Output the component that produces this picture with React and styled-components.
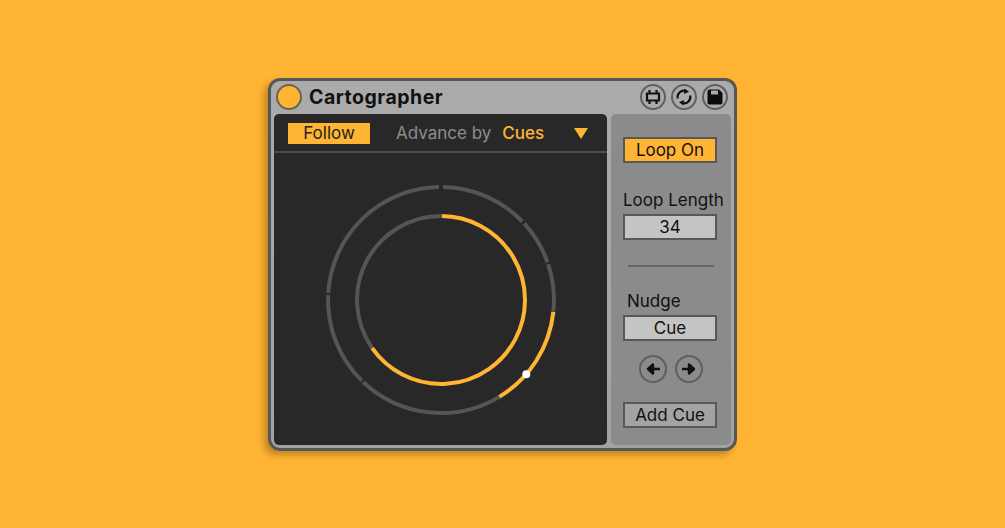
import React from 'react';
import styled, { createGlobalStyle } from 'styled-components';

const amber = '#ffb433';
const ring = '#555555';

const Global = createGlobalStyle`
	html, body { margin: 0; padding: 0; }
	body {
		background: ${amber};
		font-family: Inter, "Noto Sans", "Liberation Sans", sans-serif;
		overflow: hidden;
	}
`;

const Page = styled.div`
	width: 1005px;
	height: 528px;
	display: flex;
	justify-content: center;
	align-items: center;
	box-sizing: border-box;
	padding-top: 1px;
`;

const Device = styled.div`
	width: 469px;
	height: 373px;
	box-sizing: border-box;
	border: 3px solid #575757;
	border-radius: 12px;
	background: linear-gradient(180deg, #ababab 0%, #a2a2a2 100%);
	box-shadow: -4px 4px 6px rgba(120, 80, 10, 0.45);
	padding: 0 3px 3px 3px;
	display: flex;
	flex-direction: column;
`;

const TitleBar = styled.div`
	height: 33px;
	flex: none;
	box-sizing: border-box;
	display: flex;
	align-items: center;
	padding: 0 0 1px 0;
`;

const Lamp = styled.div`
	width: 26px;
	height: 26px;
	box-sizing: border-box;
	border-radius: 50%;
	background: ${amber};
	border: 2px solid #6a6450;
	margin-right: 7px;
	margin-left: 2px;
`;

const Title = styled.div`
	font-size: 19.5px;
	font-weight: 700;
	letter-spacing: 0.5px;
	color: #111;
	flex: 1;
`;

const TitleIcons = styled.div`
	display: flex;
	gap: 5px;
	margin-right: 3px;
`;

const RoundButton = styled.div`
	width: 26px;
	height: 26px;
	box-sizing: border-box;
	border-radius: 50%;
	border: 2px solid #5f5f5f;
	display: flex;
	align-items: center;
	justify-content: center;
`;

const Body = styled.div`
	flex: 1;
	display: flex;
	gap: 4px;
	min-height: 0;
`;

const Dark = styled.div`
	width: 333px;
	flex: none;
	background: #282828;
	border-radius: 5px;
	display: flex;
	flex-direction: column;
`;

const DarkHead = styled.div`
	height: 39px;
	flex: none;
	box-sizing: border-box;
	border-bottom: 2px solid #4d4d4d;
	display: flex;
	align-items: center;
	padding: 1px 19px 0 14px;
`;

const FollowTab = styled.div`
	width: 82px;
	height: 21px;
	background: ${amber};
	color: #222;
	font-size: 17px;
	line-height: 21px;
	text-align: center;
`;

const AdvanceLabel = styled.div`
	margin-left: 26px;
	font-size: 17px;
	color: #8e8e8e;
`;

const AdvanceValue = styled.div`
	margin-left: 11px;
	font-size: 17px;
	font-weight: 500;
	color: ${amber};
	flex: 1;
`;

const Caret = styled.div`
	width: 0;
	height: 0;
	border-left: 7px solid transparent;
	border-right: 7px solid transparent;
	border-top: 11px solid ${amber};
`;

const Rings = styled.div`
	flex: 1;
	display: flex;
	align-items: center;
	justify-content: center;
	padding-top: 2px;
`;

const Side = styled.div`
	width: 120px;
	flex: none;
	box-sizing: border-box;
	background: #8b8b8b;
	border-radius: 5px;
	padding: 23px 0 0 12px;
	display: flex;
	flex-direction: column;
`;

const Control = styled.div`
	width: 94px;
	height: 26px;
	flex: none;
	box-sizing: border-box;
	border: 2px solid #585858;
	background: ${(p) => p.$bg};
	color: #111;
	font-size: 17px;
	line-height: 22px;
	text-align: center;
`;

const Label = styled.div`
	font-size: 17px;
	line-height: 20px;
	color: #111;
	white-space: nowrap;
	margin-top: ${(p) => p.$top}px;
	margin-left: ${(p) => p.$left || 0}px;
	margin-bottom: 4px;
`;

const Divider = styled.div`
	width: 86px;
	height: 2px;
	background: #666;
	margin: 25px 0 24px 5px;
`;

const ArrowRow = styled.div`
	display: flex;
	gap: 8px;
	margin: 14px 0 19px 16px;
	& > div { width: 28px; height: 28px; }
`;

function polar(r, deg) {
	const a = ((deg - 90) * Math.PI) / 180;
	return [120 + r * Math.cos(a), 120 + r * Math.sin(a)];
}

function Arc({ r, from, to, color }) {
	const [x1, y1] = polar(r, from);
	const [x2, y2] = polar(r, to);
	const large = to - from > 180 ? 1 : 0;
	return <path d={`M${x1} ${y1}A${r} ${r} 0 ${large} 1 ${x2} ${y2}`} fill="none" stroke={color} strokeWidth="4" />;
}

const outer = [
	[1, 46, ring],
	[47.5, 70.5, ring],
	[71.5, 95.5, ring],
	[96, 149, amber],
	[149, 223.5, ring],
	[224.5, 272.5, ring],
	[273.5, 359, ring],
];

function Dial() {
	const dot = polar(113, 131);
	return (
		<svg width="240" height="240" viewBox="0 0 240 240">
			{outer.map(([a, b, c]) => (
				<Arc key={a} r={113} from={a} to={b} color={c} />
			))}
			<Arc r={84} from={235} to={360} color={ring} />
			<Arc r={84} from={0.5} to={235} color={amber} />
			<circle cx={dot[0]} cy={dot[1]} r="4" fill="#fff" />
		</svg>
	);
}

const icon = { width: 18, height: 18, viewBox: '0 0 18 18' };

export default function App() {
	return (
		<Page>
			<Global />
			<Device>
				<TitleBar>
					<Lamp />
					<Title>Cartographer</Title>
					<TitleIcons>
						<RoundButton>
							<svg {...icon}>
								<path d="M3 5.500h12v7H3z M5.500 2v3.500 M12.500 2v3.500 M5.500 12.500V16 M12.500 12.500V16" fill="none" stroke="#111" strokeWidth="2.200" />
							</svg>
						</RoundButton>
						<RoundButton>
							<svg {...icon}>
								<path d="M2.800 10.500A6.300 6.300 0 0 1 10.500 2.900" fill="none" stroke="#111" strokeWidth="2.200" />
								<path d="M9.500 0.500l4.500 3.300-5 2.300z" fill="#111" />
								<path d="M15.200 7.500A6.300 6.300 0 0 1 7.500 15.100" fill="none" stroke="#111" strokeWidth="2.200" />
								<path d="M8.500 17.500L4 14.200l5-2.300z" fill="#111" />
							</svg>
						</RoundButton>
						<RoundButton>
							<svg {...icon}>
								<path d="M1.500 3.500a2 2 0 0 1 2-2H13l3.500 3.500v9.500a2 2 0 0 1-2 2h-11a2 2 0 0 1-2-2z" fill="#0c0c0c" />
								<rect x="5" y="2.500" width="7" height="4" fill="#a8a8a8" />
							</svg>
						</RoundButton>
					</TitleIcons>
				</TitleBar>
				<Body>
					<Dark>
						<DarkHead>
							<FollowTab>Follow</FollowTab>
							<AdvanceLabel>Advance by</AdvanceLabel>
							<AdvanceValue>Cues</AdvanceValue>
							<Caret />
						</DarkHead>
						<Rings>
							<Dial />
						</Rings>
					</Dark>
					<Side>
						<Control $bg={amber}>Loop On</Control>
						<Label $top={27}>Loop Length</Label>
						<Control $bg="#c4c4c4">34</Control>
						<Divider />
						<Label $top={0} $left={4}>Nudge</Label>
						<Control $bg="#c4c4c4">Cue</Control>
						<ArrowRow>
							<RoundButton>
								<svg {...icon}>
									<path d="M16 9H7 M9 4.500L4 9l5 4.500z" fill="#111" stroke="#111" strokeWidth="2.400" strokeLinejoin="round" />
								</svg>
							</RoundButton>
							<RoundButton>
								<svg {...icon}>
									<path d="M2 9h9 M9 4.500L14 9l-5 4.500z" fill="#111" stroke="#111" strokeWidth="2.400" strokeLinejoin="round" />
								</svg>
							</RoundButton>
						</ArrowRow>
						<Control $bg="#a3a3a3">Add Cue</Control>
					</Side>
				</Body>
			</Device>
		</Page>
	);
}
